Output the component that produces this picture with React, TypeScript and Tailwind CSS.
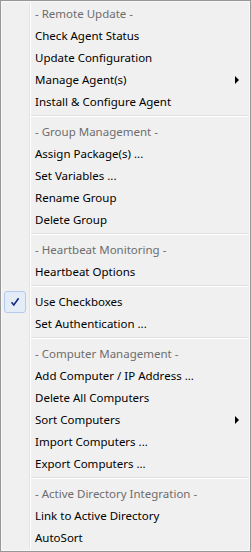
type Item =
  | { kind: "header"; label: string }
  | { kind: "item"; label: string; submenu?: boolean; checked?: boolean }
  | { kind: "sep" };

const MENU: Item[] = [
  { kind: "header", label: "- Remote Update -" },
  { kind: "item", label: "Check Agent Status" },
  { kind: "item", label: "Update Configuration" },
  { kind: "item", label: "Manage Agent(s)", submenu: true },
  { kind: "item", label: "Install & Configure Agent" },
  { kind: "sep" },
  { kind: "header", label: "- Group Management -" },
  { kind: "item", label: "Assign Package(s) ..." },
  { kind: "item", label: "Set Variables ..." },
  { kind: "item", label: "Rename Group" },
  { kind: "item", label: "Delete Group" },
  { kind: "sep" },
  { kind: "header", label: "- Heartbeat Monitoring -" },
  { kind: "item", label: "Heartbeat Options" },
  { kind: "sep" },
  { kind: "item", label: "Use Checkboxes", checked: true },
  { kind: "item", label: "Set Authentication ..." },
  { kind: "sep" },
  { kind: "header", label: "- Computer Management -" },
  { kind: "item", label: "Add Computer / IP Address ..." },
  { kind: "item", label: "Delete All Computers" },
  { kind: "item", label: "Sort Computers", submenu: true },
  { kind: "item", label: "Import Computers ..." },
  { kind: "item", label: "Export Computers ..." },
  { kind: "sep" },
  { kind: "header", label: "- Active Directory Integration -" },
  { kind: "item", label: "Link to Active Directory" },
  { kind: "item", label: "AutoSort" },
];

function Gutter() {
  return <span className="w-[2px] self-stretch border-l border-[#e2e3e3] bg-white" />;
}

function CheckBox() {
  return (
    <div className="flex h-[22px] w-[22px] items-center justify-center rounded-[3px] border border-[#b4c9ec] bg-[#e4ecf8]">
      <svg width="10" height="10" viewBox="0 0 10 10">
        <path d="M1.5 5.2 L3.8 8 L8.6 1.2" fill="none" stroke="#162a80" strokeWidth="1.6" />
      </svg>
    </div>
  );
}

function Row({ item }: { item: Item }) {
  if (item.kind === "sep") {
    return (
      <div className="flex h-[8px]">
        <div className="w-[26px]" />
        <Gutter />
        <div className="flex flex-1 flex-col pt-[2px]">
          <div className="h-px bg-[#e0e0e0]" />
          <div className="h-px bg-white" />
        </div>
      </div>
    );
  }

  return (
    <div className="flex h-[22px] items-stretch">
      <div className="flex w-[26px] items-center justify-start pl-px">
        {item.kind === "item" && item.checked && <CheckBox />}
      </div>
      <Gutter />
      <div
        className={`flex flex-1 items-center pl-[4px] pr-[9px] ${
          item.kind === "header" ? "text-[#6d6d6d]" : "text-black"
        }`}
      >
        <span className="flex-1 whitespace-nowrap">{item.label}</span>
        {item.kind === "item" && item.submenu && (
          <svg width="4" height="8" viewBox="0 0 4 8">
            <path d="M0 0 L4 4 L0 8 Z" fill="#000" />
          </svg>
        )}
      </div>
    </div>
  );
}

export default function App() {
  return (
    <div
      className="flex h-[552px] w-[251px] flex-col border border-[#979797] bg-[#f0f0f0] p-[2px] text-[11.5px] leading-none shadow-[inset_1px_1px_0_#f8f8f8,inset_-1px_-1px_0_#f8f8f8]"
      style={{ fontFamily: '"Noto Sans", "Open Sans", sans-serif' }}
    >
      {MENU.map((item, i) => (
        <Row key={i} item={item} />
      ))}
    </div>
  );
}
